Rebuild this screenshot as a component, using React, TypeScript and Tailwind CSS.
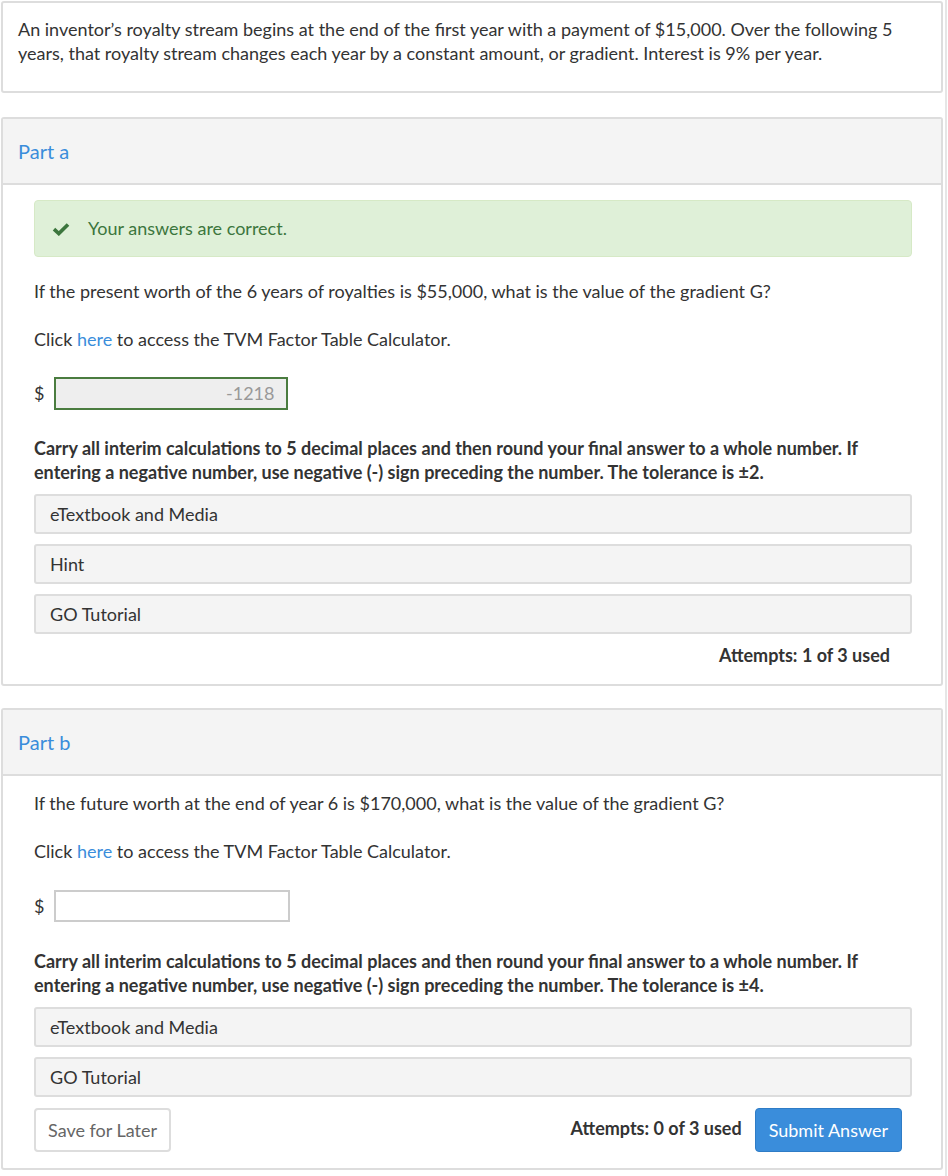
import React from 'react';

const font = { fontFamily: 'Lato, "Open Sans", sans-serif' };

// Collapsible resource row (eTextbook, Hint, tutorial)
const ResourceRow = ({ label }: { label: string }) => (
  <div className="h-[40px] flex items-center px-[14px] bg-[#f4f4f4] border-2 border-[#dddddd] rounded-[3px] text-[#333333]">
    {label}
  </div>
);

const CheckIcon = () => (
  <svg width="18" height="14" viewBox="0 0 18 14" className="shrink-0">
    <path d="M2 7.2 L6.8 11.6 L16 2.4" fill="none" stroke="#3c763d" strokeWidth="3.6" strokeLinejoin="miter" />
  </svg>
);

const CalcLink = () => (
  <p className="leading-[24px]">
    Click <span className="text-[#3a8ddb]">here</span> to access the TVM Factor Table Calculator.
  </p>
);

const Instructions = ({ tolerance }: { tolerance: string }) => (
  <p className="font-bold leading-[24px] pr-[20px]">
    Carry all interim calculations to 5 decimal places and then round your final answer to a whole number. If entering a
    negative number, use negative (-) sign preceding the number. The tolerance is ±{tolerance}.
  </p>
);

const PartHeader = ({ title }: { title: string }) => (
  <div className="h-[66px] flex items-center px-[15px] bg-[#f4f4f4] border-b-2 border-[#dddddd] text-[20px] text-[#3a8ddb]">
    {title}
  </div>
);

export default function App() {
  return (
    <div className="flex bg-white min-h-[1176px] text-[18px] text-[#333333]" style={font}>
      <div className="w-[944px] pl-[1px] pt-[1px] pr-[1px] pb-[6px]">
        {/* problem statement */}
        <div className="border-2 border-[#dddddd] rounded-[3px] px-[15px] pt-[14px] pb-[26px]">
          <p className="leading-[24px] pr-[10px]">
            An inventor’s royalty stream begins at the end of the first year with a payment of $15,000. Over the following 5
            years, that royalty stream changes each year by a constant amount, or gradient. Interest is 9% per year.
          </p>
        </div>

        {/* Part a */}
        <div className="mt-[24px] border-2 border-[#dddddd] rounded-[3px] overflow-hidden">
          <PartHeader title="Part a" />
          <div className="pl-[31px] pr-[29px] pt-[15px] pb-[17px]">
            <div className="h-[57px] flex items-center gap-[18px] pl-[17px] bg-[#dff0d8] border border-[#d6e9c6] rounded-[4px] text-[#3c763d]">
              <CheckIcon />
              <span>Your answers are correct.</span>
            </div>
            <p className="mt-[22px] leading-[24px]">
              If the present worth of the 6 years of royalties is $55,000, what is the value of the gradient G?
            </p>
            <div className="mt-[24px]">
              <CalcLink />
            </div>
            <div className="mt-[26px] flex items-center gap-[10px]">
              <span>$</span>
              <div className="w-[234px] h-[33px] flex items-center justify-end pr-[12px] bg-[#eeeeee] border-2 border-[#4a7c3f] text-[#999999]">
                -1218
              </div>
            </div>
            <div className="mt-[26px]">
              <Instructions tolerance="2" />
            </div>
            <div className="mt-[10px] flex flex-col gap-[10px]">
              <ResourceRow label="eTextbook and Media" />
              <ResourceRow label="Hint" />
              <ResourceRow label="GO Tutorial" />
            </div>
            <div className="mt-[9px] flex justify-end pr-[22px] font-bold leading-[24px]">Attempts: 1 of 3 used</div>
          </div>
        </div>

        {/* Part b */}
        <div className="mt-[22px] border-2 border-[#dddddd] rounded-[3px] overflow-hidden">
          <PartHeader title="Part b" />
          <div className="pl-[31px] pr-[29px] pt-[15px] pb-[16px]">
            <p className="leading-[24px]">If the future worth at the end of year 6 is $170,000, what is the value of the gradient G?</p>
            <div className="mt-[24px]">
              <CalcLink />
            </div>
            <div className="mt-[27px] flex items-center gap-[10px]">
              <span>$</span>
              <div className="w-[236px] h-[32px] bg-white border-2 border-[#cccccc]" />
            </div>
            <div className="mt-[27px]">
              <Instructions tolerance="4" />
            </div>
            <div className="mt-[10px] flex flex-col gap-[10px]">
              <ResourceRow label="eTextbook and Media" />
              <ResourceRow label="GO Tutorial" />
            </div>
            <div className="mt-[11px] flex items-center">
              <button className="h-[44px] px-[12px] border-2 border-[#dddddd] rounded-[4px] bg-white text-[#666666]">
                Save for Later
              </button>
              <div className="ml-auto flex items-center gap-[13px] pr-[10px]">
                <span className="font-bold mb-[4px]">Attempts: 0 of 3 used</span>
                <button className="h-[44px] px-[13px] rounded-[4px] bg-[#3a8ddb] border border-[#2f7cc6] text-white">
                  Submit Answer
                </button>
              </div>
            </div>
          </div>
        </div>
      </div>
      <div className="w-[2px] ml-[1px] bg-[#e6e6e6]" />
    </div>
  );
}
